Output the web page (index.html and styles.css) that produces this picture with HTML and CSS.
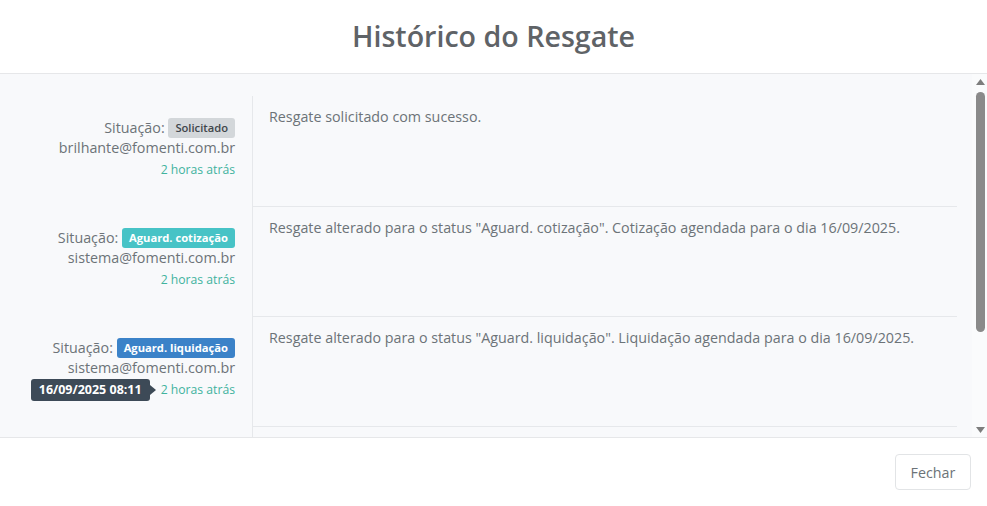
FILE: index.html
```html
<!DOCTYPE html>
<html lang="pt-BR">
<head>
<meta charset="utf-8">
<title>Histórico do Resgate</title>
<link rel="stylesheet" href="styles.css">
</head>
<body>
<div class="modal">
  <header class="modal-header">
    <h1 class="modal-title">Histórico do Resgate</h1>
  </header>
  <div class="modal-body">
    <div class="scroll-area">
      <div class="timeline">
        <div class="row">
          <div class="meta">
            <div class="status">Situação: <span class="badge badge-gray">Solicitado</span></div>
            <div class="user">brilhante@fomenti.com.br</div>
            <div class="time"><span class="time-text">2 horas atrás</span></div>
          </div>
          <div class="desc">Resgate solicitado com sucesso.</div>
        </div>
        <div class="row">
          <div class="meta">
            <div class="status">Situação: <span class="badge badge-teal">Aguard. cotização</span></div>
            <div class="user">sistema@fomenti.com.br</div>
            <div class="time"><span class="time-text">2 horas atrás</span></div>
          </div>
          <div class="desc bordered">Resgate alterado para o status "Aguard. cotização". Cotização agendada para o dia 16/09/2025.</div>
        </div>
        <div class="row">
          <div class="meta">
            <div class="status">Situação: <span class="badge badge-blue">Aguard. liquidação</span></div>
            <div class="user">sistema@fomenti.com.br</div>
            <div class="time"><span class="time-text">2 horas atrás<span class="tooltip">16/09/2025 08:11</span></span></div>
          </div>
          <div class="desc bordered">Resgate alterado para o status "Aguard. liquidação". Liquidação agendada para o dia 16/09/2025.</div>
        </div>
        <div class="row row-last">
          <div class="meta"></div>
          <div class="desc bordered"></div>
        </div>
      </div>
    </div>
    <div class="scrollbar" aria-hidden="true">
      <div class="sb-btn">
        <svg width="9" height="6" viewBox="0 0 9 6"><path d="M4.5 0 L9 6 L0 6 Z" fill="#7d7d7d"/></svg>
      </div>
      <div class="sb-track"><div class="sb-thumb"></div></div>
      <div class="sb-btn">
        <svg width="9" height="6" viewBox="0 0 9 6"><path d="M0 0 L9 0 L4.5 6 Z" fill="#7d7d7d"/></svg>
      </div>
    </div>
  </div>
  <footer class="modal-footer">
    <button class="btn" type="button">Fechar</button>
  </footer>
</div>
</body>
</html>
```
FILE: styles.css
```css
* { box-sizing: border-box; }
html, body { margin: 0; padding: 0; height: 100%; }
body {
  font-family: "Open Sans", "Liberation Sans", sans-serif;
  font-size: 14.3px;
  color: #6c7378;
  background: #ffffff;
}
.modal {
  display: flex;
  flex-direction: column;
  height: 506px;
}
.modal-header {
  height: 74px;
  flex: none;
  display: flex;
  align-items: center;
  justify-content: center;
  border-bottom: 1px solid #e6e7e9;
  padding-bottom: 1px;
}
.modal-title {
  margin: 0;
  font-size: 28.6px;
  font-weight: 600;
  color: #5f6367;
  line-height: 1.2;
}
.modal-body {
  flex: 1;
  min-height: 0;
  display: flex;
  background: #f8f9fb;
}
.scroll-area {
  flex: 1;
  min-width: 0;
  overflow: hidden;
}
.scrollbar {
  flex: none;
  width: 15px;
  display: flex;
  flex-direction: column;
  background: #fafbfc;
}
.sb-btn {
  height: 15px;
  flex: none;
  display: flex;
  align-items: center;
  justify-content: center;
  padding-left: 1px;
}
.sb-btn svg { display: block; }
.sb-track {
  flex: 1;
  padding: 3px 2px 0 4px;
}
.sb-thumb {
  height: 240px;
  background: #8a8a8a;
  border-radius: 5px;
}
.timeline {
  padding: 22px 15px 0 0;
}
.row {
  display: grid;
  grid-template-columns: 252px 1fr;
  height: 110px;
}
.meta {
  text-align: right;
  padding: 22px 17px 0 0;
}
.status {
  line-height: 20px;
}
.badge {
  display: inline-block;
  vertical-align: top;
  font-size: 11.2px;
  font-weight: 700;
  line-height: 20px;
  height: 20px;
  padding: 0 7px;
  border-radius: 3px;
  color: #ffffff;
}
.badge-gray { background: #d3d7da; color: #41464b; font-weight: 600; }
.badge-teal { background: #47c3c6; }
.badge-blue { background: #3b82c8; }
.user {
  line-height: 20px;
}
.time {
  margin-top: 3px;
  font-size: 12.2px;
  line-height: 18px;
  color: #3fb39e;
}
.time-text {
  position: relative;
}
.tooltip {
  position: absolute;
  right: calc(100% + 11px);
  top: 50%;
  transform: translateY(-50%);
  white-space: nowrap;
  background: #3d4a57;
  color: #ffffff;
  font-size: 12.5px;
  font-weight: 700;
  line-height: 22px;
  padding: 0 8px;
  border-radius: 3px;
}
.tooltip::after {
  content: "";
  position: absolute;
  left: 100%;
  top: 50%;
  margin-top: -5px;
  border-style: solid;
  border-width: 5px 0 5px 6px;
  border-color: transparent transparent transparent #3d4a57;
}
.desc {
  border-left: 1px solid #e6e8eb;
  padding: 10px 16px;
  line-height: 21px;
}
.desc.bordered {
  border-top: 1px solid #e6e8eb;
}
.modal-footer {
  flex: none;
  height: 69px;
  border-top: 1px solid #e6e7e9;
  display: flex;
  align-items: center;
  justify-content: flex-end;
  padding-right: 16px;
}
.btn {
  font-family: "Open Sans", "Liberation Sans", sans-serif;
  font-size: 14.3px;
  color: #6c7378;
  background: #ffffff;
  border: 1px solid #e2e4e6;
  border-radius: 4px;
  width: 76px;
  height: 36px;
  padding: 0;
  cursor: pointer;
}
```
